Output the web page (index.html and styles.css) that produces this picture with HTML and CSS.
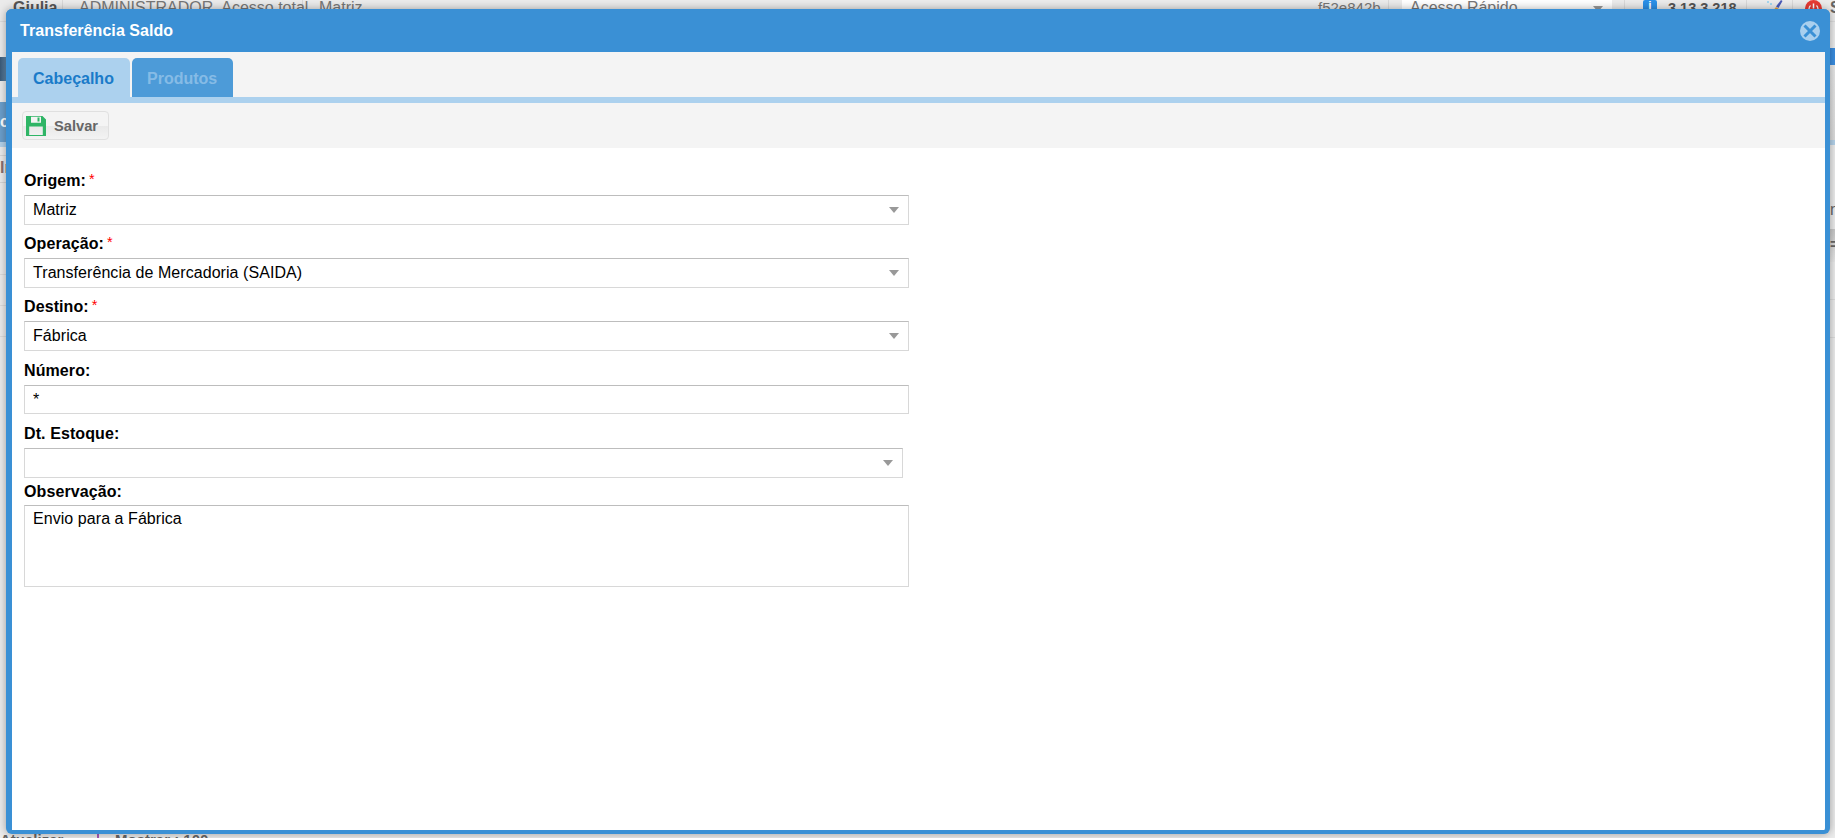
FILE: index.html
```html
<!DOCTYPE html>
<html lang="pt-BR">
<head>
<meta charset="utf-8">
<title>Transferência Saldo</title>
<link rel="stylesheet" href="styles.css">
</head>
<body>
<div class="page">
  <header class="topbar">
    <div class="tb-cell tb-user">Giulia</div>
    <div class="tb-cell tb-role">ADMINISTRADOR, Acesso total</div>
    <div class="tb-cell tb-unit">Matriz</div>
    <div class="tb-spacer"></div>
    <div class="tb-cell tb-hash">f52e842b</div>
    <div class="tb-select">Acesso Rápido<span class="tb-caret"></span></div>
    <div class="tb-cell tb-ver"><span class="tb-info">i</span><b>3.13.3.218</b></div>
    <div class="tb-cell tb-broom">
      <svg width="18" height="16" viewBox="0 0 18 16"><path d="M16 0l1.500 1-4 7-2.500-1.500z" fill="#4a5ab8"/><path d="M11 7l3 2-3 7H4z" fill="#e8a33a"/><circle cx="3" cy="2" r="1" fill="#8fd0f0"/><circle cx="6" cy="4" r="1" fill="#8fd0f0"/></svg>
    </div>
    <div class="tb-cell tb-power">
      <svg width="17" height="17" viewBox="0 0 17 17"><circle cx="8.500" cy="8.500" r="8.500" fill="#e83b34"/><path d="M8.500 3.500v5" stroke="#fff" stroke-width="1.500" fill="none"/><path d="M5.500 5.500a4.500 4.500 0 1 0 6 0" stroke="#fff" stroke-width="1.200" fill="none"/></svg>
    </div>
    <div class="tb-last">S</div>
  </header>
  <div class="backdrop">
    <div class="side side-left">
      <div class="s-logo"></div>
      <div class="s-nav">c</div>
      <div class="s-sub"></div>
      <div class="s-title">In</div>
      <div class="s-row"></div>
      <div class="s-row s-row-short"></div>
      <div class="s-row s-row-short"></div>
    </div>
    <div class="side side-right">
      <div class="r-blue"></div>
      <div class="r-panel"></div>
      <div class="s-sub"></div>
      <div class="r-n">n</div>
      <div class="r-head">=</div>
      <div class="s-row r-row"></div>
      <div class="s-row r-row"></div>
    </div>
  </div>
  <footer class="foot"><span class="foot-a">Atualizar</span><span class="foot-bar"></span><span class="foot-b">Mostrar : 100</span></footer>
</div>

<section class="modal">
  <div class="modal-head">
    <h1 class="modal-title">Transferência Saldo</h1>
    <svg class="modal-close" width="20" height="20" viewBox="0 0 20 20"><circle cx="10" cy="10" r="10" fill="#a9cfee"/><path d="M4.500 4.500l11 11M15.500 4.500l-11 11" stroke="#3a90d5" stroke-width="3" fill="none"/></svg>
  </div>
  <nav class="tabs">
    <div class="tab tab-on">Cabeçalho</div>
    <div class="tab tab-off">Produtos</div>
  </nav>
  <div class="tab-line"></div>
  <div class="toolbar">
    <button class="btn" type="button">
      <svg width="20" height="20" viewBox="0 0 20 20"><path fill="#2fb566" fill-rule="evenodd" d="M0 0h16.500L20 3.500V20H0zM5 0.700V6.800h10V0.700zM11.500 1.500h2v4h-2zM3.200 10.500V19h13.600v-8.500z"/></svg>
      <span>Salvar</span>
    </button>
  </div>
  <form class="form">
    <div class="field">
      <div class="lbl">Origem:<i class="req">*</i></div>
      <div class="combo"><span>Matriz</span><i class="arrow"></i></div>
    </div>
    <div class="field">
      <div class="lbl">Operação:<i class="req">*</i></div>
      <div class="combo"><span>Transferência de Mercadoria (SAIDA)</span><i class="arrow"></i></div>
    </div>
    <div class="field">
      <div class="lbl">Destino:<i class="req">*</i></div>
      <div class="combo"><span>Fábrica</span><i class="arrow"></i></div>
    </div>
    <div class="field">
      <div class="lbl">Número:</div>
      <input class="inp" type="text" value="*">
    </div>
    <div class="field field-tight">
      <div class="lbl">Dt. Estoque:</div>
      <div class="combo combo-date"><span></span><i class="arrow"></i></div>
    </div>
    <div class="field">
      <div class="lbl lbl-tight">Observação:</div>
      <textarea class="area">Envio para a Fábrica</textarea>
    </div>
  </form>
</section>
</body>
</html>
```
FILE: styles.css
```css
* { box-sizing: border-box; }
html, body { margin: 0; height: 838px; overflow: hidden; }
body { font-family: "Liberation Sans", Arial, sans-serif; font-size: 16px; color: #000; background: #ececec; }

.page { height: 838px; display: flex; flex-direction: column; overflow: hidden; background: #ececec; color: #777; }

.topbar { height: 22px; flex: none; display: flex; align-items: flex-start; background: #ebebeb; border-bottom: 1px solid #ddd; line-height: 16px; font-size: 16px; }
.tb-cell { height: 22px; flex: none; border-right: 1px solid #d8d8d8; white-space: nowrap; }
.tb-user { width: 63px; padding-left: 13px; font-weight: 700; color: #555; }
.tb-role { width: 240px; padding-left: 16px; }
.tb-unit { padding-left: 16px; border-right: 0; }
.tb-spacer { flex: 1; }
.tb-hash { width: 71px; font-size: 15px; }
.tb-select { width: 210px; flex: none; margin-left: 13px; height: 22px; padding-left: 8px; background: #fff; position: relative; }
.tb-caret { position: absolute; right: 9px; top: 6px; border: 5px solid transparent; border-top: 6px solid #999; }
.tb-ver { width: 123px; margin-left: 12px; padding-left: 18px; display: flex; gap: 11px; font-size: 14.5px; color: #555; border-left: 1px solid #d8d8d8; }
.tb-info { width: 14px; height: 16px; flex: none; background: #2a90e8; border-radius: 2px; color: #fff; font-weight: 700; font-size: 12px; text-align: center; line-height: 13px; }
.tb-broom { width: 46px; padding-left: 18px; }
.tb-power { width: 37px; padding-left: 12px; border-right: 0; }
.tb-last { width: 5px; flex: none; font-weight: 700; color: #666; overflow: hidden; }

.backdrop { flex: 1; display: flex; justify-content: space-between; min-height: 0; }
.side { display: flex; flex-direction: column; }

.side-left { width: 6px; }
.s-logo { height: 24px; margin-top: 35px; background: linear-gradient(90deg, #3a5a78, #5f86a8); }
.s-nav { height: 40px; margin-top: 21px; background: #6b9fcc; color: #fff; font-weight: 700; font-size: 16px; line-height: 40px; overflow: hidden; }
.s-sub { height: 5px; background: #b4d2ea; flex: none; }
.s-title { height: 36px; padding-top: 12px; border-bottom: 1px solid #d6d6d6; color: #8a7070; font-weight: 700; line-height: 18px; overflow: hidden; background: linear-gradient(#d6d6d6 1px, transparent 1px) 0 8px no-repeat; }
.s-row { height: 31px; border-bottom: 1px solid #dcdcdc; }
.side-left .s-row:nth-of-type(5) { height: 92px; }

.side-right { width: 5px; }
.r-blue { height: 17px; margin-top: 26px; background: #3a8de0; }
.r-panel { height: 75px; background: linear-gradient(#e8e8e8, #dcdcdc); border-radius: 5px 0 0 0; }
.r-n { height: 73px; padding-top: 57px; line-height: 16px; color: #666; font-size: 16px; overflow: hidden; }
.r-head { height: 33px; margin-top: 11px; background: linear-gradient(#c8c8c8, #e8e8e8); color: #666; font-weight: 700; line-height: 32px; overflow: hidden; }
.r-row { height: 38px; }

.foot { height: 7px; flex: none; display: flex; line-height: 18px; font-size: 15px; color: #666; }
.foot-a { width: 97px; font-weight: 700; }
.foot-bar { width: 2px; height: 20px; background: #a85bb8; }
.foot-b { margin-left: 16px; font-weight: 700; }

.modal { position: absolute; left: 6px; top: 9px; width: 1824px; height: 825px; display: flex; flex-direction: column; background: #fff; border: solid #3a90d5; border-width: 0 5px 4px 6px; border-radius: 6px; box-shadow: 0 0 9px rgba(0, 0, 0, .35); }
.modal-head { height: 43px; flex: none; margin: 0 -5px 0 -6px; padding: 0 10px 0 14px; display: flex; align-items: center; justify-content: space-between; background: #3a90d5; border-radius: 6px 6px 0 0; }
.modal-title { margin: 0; font-size: 16px; font-weight: 700; color: #fff; letter-spacing: .06px; }

.tabs { height: 45px; flex: none; padding: 6px 0 0 6px; display: flex; gap: 2px; background: #f4f4f4; }
.tab { height: 39px; padding: 0 15px; font-weight: 700; line-height: 41px; border-radius: 5px 5px 0 0; }
.tab-on { width: 112px; background: #acd1ee; color: #1a7bc9; }
.tab-off { width: 101px; background: #4d9bd8; color: #86bbe6; }
.tab-line { height: 6px; flex: none; background: #acd1ee; }

.toolbar { height: 45px; flex: none; padding: 8px 10px; background: #f4f4f4; }
.btn { width: 87px; height: 29px; padding: 0 0 0 3px; display: flex; align-items: center; gap: 8px; border: 1px solid #e0e0e0; border-radius: 4px; background: linear-gradient(#f4f4f4 50%, #e9e9e9 52%, #f3f3f3); color: #666; font: 700 14.67px "Liberation Sans", Arial, sans-serif; }

.form { padding: 22px 0 0 12px; }
.field { margin-bottom: 8.65px; }
.field-tight { margin-bottom: 4.4px; }
.lbl { height: 20px; margin-bottom: 5px; line-height: 22px; font-weight: 700; color: #000; letter-spacing: .1px; }
.lbl-tight { margin-bottom: 3px; line-height: 20px; }
.req { margin-left: 3px; color: #f00; font-style: normal; font-weight: 400; font-size: 14.5px; vertical-align: 2px; line-height: 0; }

.combo, .inp, .area { display: block; width: 885px; background: #fff; border: 1px solid #d8d8d8; border-top-color: #bdbdbd; font: 16px "Liberation Sans", Arial, sans-serif; letter-spacing: .06px; color: #000; }
.combo { height: 29.6px; padding: 0 9px 0 8px; display: flex; align-items: center; justify-content: space-between; line-height: 18px; }
.combo-date { width: 879px; }
.arrow { width: 0; height: 0; border-style: solid; border-width: 6px 5px 0; border-color: #999 transparent transparent; }
.inp { height: 29.6px; padding: 0 8px; outline: 0; }
.area { height: 82px; padding: 4px 8px; line-height: 18px; resize: none; outline: 0; overflow: hidden; }
```
